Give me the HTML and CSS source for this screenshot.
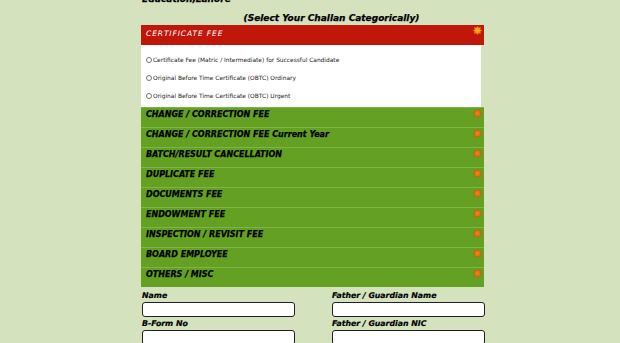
FILE: index.html
```html
<!DOCTYPE html>
<html>
<head>
<meta charset="utf-8">
<link rel="stylesheet" href="styles.css">
</head>
<body>
<div class="page">
  <div class="board">Education,Lahore</div>
  <div class="select-title">(Select Your Challan Categorically)</div>
  <div class="accordion">
    <div class="acc-head active">
      <span>CERTIFICATE FEE</span>
      <svg class="ico" viewBox="0 0 10 10"><path d="M5 0.3 L6.1 2.3 L8.4 1.6 L7.7 3.9 L9.7 5 L7.7 6.1 L8.4 8.4 L6.1 7.7 L5 9.7 L3.9 7.7 L1.6 8.4 L2.3 6.1 L0.3 5 L2.3 3.9 L1.6 1.6 L3.9 2.3 Z" fill="#f4a41c" stroke="#e0700e" stroke-width="0.8"/></svg>
    </div>
    <div class="acc-body">
      <label class="opt"><input type="radio" name="c">Certificate Fee (Matric / Intermediate) for Successful Candidate</label>
      <label class="opt"><input type="radio" name="c">Original Before Time Certificate (OBTC) Ordinary</label>
      <label class="opt"><input type="radio" name="c">Original Before Time Certificate (OBTC) Urgent</label>
    </div>
    <div class="acc-head"><span>CHANGE / CORRECTION FEE</span><svg class="ico" viewBox="0 0 10 10"><path d="M5 0.3 L6.1 2.3 L8.4 1.6 L7.7 3.9 L9.7 5 L7.7 6.1 L8.4 8.4 L6.1 7.7 L5 9.7 L3.9 7.7 L1.6 8.4 L2.3 6.1 L0.3 5 L2.3 3.9 L1.6 1.6 L3.9 2.3 Z" fill="#ec7a18" stroke="#c9580c" stroke-width="0.8"/></svg></div>
    <div class="acc-head"><span>CHANGE / CORRECTION FEE Current Year</span><svg class="ico" viewBox="0 0 10 10"><path d="M5 0.3 L6.1 2.3 L8.4 1.6 L7.7 3.9 L9.7 5 L7.7 6.1 L8.4 8.4 L6.1 7.7 L5 9.7 L3.9 7.7 L1.6 8.4 L2.3 6.1 L0.3 5 L2.3 3.9 L1.6 1.6 L3.9 2.3 Z" fill="#ec7a18" stroke="#c9580c" stroke-width="0.8"/></svg></div>
    <div class="acc-head"><span>BATCH/RESULT CANCELLATION</span><svg class="ico" viewBox="0 0 10 10"><path d="M5 0.3 L6.1 2.3 L8.4 1.6 L7.7 3.9 L9.7 5 L7.7 6.1 L8.4 8.4 L6.1 7.7 L5 9.7 L3.9 7.7 L1.6 8.4 L2.3 6.1 L0.3 5 L2.3 3.9 L1.6 1.6 L3.9 2.3 Z" fill="#ec7a18" stroke="#c9580c" stroke-width="0.8"/></svg></div>
    <div class="acc-head"><span>DUPLICATE FEE</span><svg class="ico" viewBox="0 0 10 10"><path d="M5 0.3 L6.1 2.3 L8.4 1.6 L7.7 3.9 L9.7 5 L7.7 6.1 L8.4 8.4 L6.1 7.7 L5 9.7 L3.9 7.7 L1.6 8.4 L2.3 6.1 L0.3 5 L2.3 3.9 L1.6 1.6 L3.9 2.3 Z" fill="#ec7a18" stroke="#c9580c" stroke-width="0.8"/></svg></div>
    <div class="acc-head"><span>DOCUMENTS FEE</span><svg class="ico" viewBox="0 0 10 10"><path d="M5 0.3 L6.1 2.3 L8.4 1.6 L7.7 3.9 L9.7 5 L7.7 6.1 L8.4 8.4 L6.1 7.7 L5 9.7 L3.9 7.7 L1.6 8.4 L2.3 6.1 L0.3 5 L2.3 3.9 L1.6 1.6 L3.9 2.3 Z" fill="#ec7a18" stroke="#c9580c" stroke-width="0.8"/></svg></div>
    <div class="acc-head"><span>ENDOWMENT FEE</span><svg class="ico" viewBox="0 0 10 10"><path d="M5 0.3 L6.1 2.3 L8.4 1.6 L7.7 3.9 L9.7 5 L7.7 6.1 L8.4 8.4 L6.1 7.7 L5 9.7 L3.9 7.7 L1.6 8.4 L2.3 6.1 L0.3 5 L2.3 3.9 L1.6 1.6 L3.9 2.3 Z" fill="#ec7a18" stroke="#c9580c" stroke-width="0.8"/></svg></div>
    <div class="acc-head"><span>INSPECTION / REVISIT FEE</span><svg class="ico" viewBox="0 0 10 10"><path d="M5 0.3 L6.1 2.3 L8.4 1.6 L7.7 3.9 L9.7 5 L7.7 6.1 L8.4 8.4 L6.1 7.7 L5 9.7 L3.9 7.7 L1.6 8.4 L2.3 6.1 L0.3 5 L2.3 3.9 L1.6 1.6 L3.9 2.3 Z" fill="#ec7a18" stroke="#c9580c" stroke-width="0.8"/></svg></div>
    <div class="acc-head"><span>BOARD EMPLOYEE</span><svg class="ico" viewBox="0 0 10 10"><path d="M5 0.3 L6.1 2.3 L8.4 1.6 L7.7 3.9 L9.7 5 L7.7 6.1 L8.4 8.4 L6.1 7.7 L5 9.7 L3.9 7.7 L1.6 8.4 L2.3 6.1 L0.3 5 L2.3 3.9 L1.6 1.6 L3.9 2.3 Z" fill="#ec7a18" stroke="#c9580c" stroke-width="0.8"/></svg></div>
    <div class="acc-head"><span>OTHERS / MISC</span><svg class="ico" viewBox="0 0 10 10"><path d="M5 0.3 L6.1 2.3 L8.4 1.6 L7.7 3.9 L9.7 5 L7.7 6.1 L8.4 8.4 L6.1 7.7 L5 9.7 L3.9 7.7 L1.6 8.4 L2.3 6.1 L0.3 5 L2.3 3.9 L1.6 1.6 L3.9 2.3 Z" fill="#ec7a18" stroke="#c9580c" stroke-width="0.8"/></svg></div>
  </div>
  <div class="form">
    <div class="field">
      <div class="lbl">Name</div>
      <input class="txt" type="text">
    </div>
    <div class="field">
      <div class="lbl">Father / Guardian Name</div>
      <input class="txt" type="text">
    </div>
    <div class="field">
      <div class="lbl">B-Form No</div>
      <input class="txt" type="text">
    </div>
    <div class="field">
      <div class="lbl">Father / Guardian NIC</div>
      <input class="txt" type="text">
    </div>
  </div>
</div>
</body>
</html>
```

FILE: styles.css
```css
html, body {
  margin: 0;
  padding: 0;
  background: #d4e2bd;
  overflow: hidden;
}
body {
  font-family: "DejaVu Sans", Verdana, sans-serif;
  color: #000;
}
.page {
  width: 343px;
  margin-left: 141px;
}
.board {
  font-size: 9px;
  font-weight: bold;
  font-style: italic;
  line-height: 11px;
  margin-top: -6px;
  padding-left: 1px;
  -webkit-text-stroke: 0.25px #000;
}
.select-title {
  font-size: 9px;
  font-weight: bold;
  font-style: italic;
  text-align: center;
  line-height: 12px;
  margin-top: 7px;
  margin-bottom: 1px;
  padding-left: 38px;
  -webkit-text-stroke: 0.25px #000;
}
.acc-head {
  display: flex;
  align-items: flex-start;
  justify-content: space-between;
  height: 19px;
  padding: 0 3px 0 5px;
  background: #64a022;
  border-top: 1px solid #7db546;
  font-size: 8px;
  font-weight: bold;
  font-style: italic;
  -webkit-text-stroke: 0.25px #000;
}
.acc-head span {
  line-height: 12px;
  padding-top: 1px;
}
.acc-head.active {
  background: #c1170b;
  border-top: 1px solid #c1170b;
  color: #fff;
  font-weight: normal;
  letter-spacing: 0.9px;
  font-size: 7.5px;
  -webkit-text-stroke: 0;
}
.acc-head.active span {
  padding-top: 2px;
}
.ico {
  width: 9px;
  height: 9px;
  margin-top: 1px;
  margin-right: -1px;
}
.acc-head.active .ico {
  margin-top: 0;
}
.acc-body {
  background: #fff;
  margin-right: 3px;
  padding: 6px 0 8px 5px;
  height: 48px;
}
.opt {
  display: flex;
  align-items: center;
  height: 18px;
  font-size: 5.9px;
  color: #222;
}
.opt input {
  width: 6px;
  height: 6px;
  margin: 0 1px 0 0;
}
.form {
  display: grid;
  grid-template-columns: 154px 153px;
  column-gap: 36px;
  padding-top: 4px;
}
.field {
  display: flex;
  flex-direction: column;
  padding-left: 1px;
}
.lbl {
  font-size: 7.8px;
  font-weight: bold;
  font-style: italic;
  line-height: 10px;
  height: 11px;
  -webkit-text-stroke: 0.2px #000;
}
.txt {
  box-sizing: border-box;
  width: 153px;
  height: 15px;
  border: 1.5px solid #222;
  border-radius: 3px;
  background: #fff;
  margin: 0 0 2px 0;
  padding: 0;
}
```
